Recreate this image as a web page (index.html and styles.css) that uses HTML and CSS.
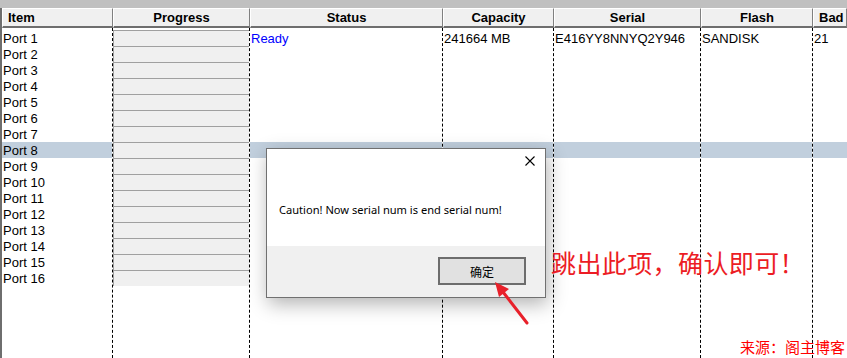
FILE: index.html
```html
<!DOCTYPE html>
<html>
<head>
  <meta charset="utf-8">
  <title>Mass Production</title>
  <link rel="stylesheet" href="styles.css">
</head>
<body>

  <div class="topbar"></div>

  <div class="grid">
    <div class="col col-item">
      <div class="head head-left">Item</div>
      <div class="rows">
        <div class="cell">Port 1</div>
        <div class="cell">Port 2</div>
        <div class="cell">Port 3</div>
        <div class="cell">Port 4</div>
        <div class="cell">Port 5</div>
        <div class="cell">Port 6</div>
        <div class="cell">Port 7</div>
        <div class="cell sel">Port 8</div>
        <div class="cell">Port 9</div>
        <div class="cell">Port 10</div>
        <div class="cell">Port 11</div>
        <div class="cell">Port 12</div>
        <div class="cell">Port 13</div>
        <div class="cell">Port 14</div>
        <div class="cell">Port 15</div>
        <div class="cell">Port 16</div>
      </div>
    </div>

    <div class="col col-progress">
      <div class="head">Progress</div>
      <div class="rows">
        <div class="bar"></div>
        <div class="bar"></div>
        <div class="bar"></div>
        <div class="bar"></div>
        <div class="bar"></div>
        <div class="bar"></div>
        <div class="bar"></div>
        <div class="bar"></div>
        <div class="bar"></div>
        <div class="bar"></div>
        <div class="bar"></div>
        <div class="bar"></div>
        <div class="bar"></div>
        <div class="bar"></div>
        <div class="bar"></div>
        <div class="bar"></div>
      </div>
    </div>

    <div class="col col-status">
      <div class="head">Status</div>
      <div class="rows">
        <div class="cell ready">Ready</div>
        <div class="cell"></div>
        <div class="cell"></div>
        <div class="cell"></div>
        <div class="cell"></div>
        <div class="cell"></div>
        <div class="cell"></div>
        <div class="cell sel"></div>
      </div>
    </div>

    <div class="col col-capacity">
      <div class="head">Capacity</div>
      <div class="rows">
        <div class="cell">241664 MB</div>
        <div class="cell"></div>
        <div class="cell"></div>
        <div class="cell"></div>
        <div class="cell"></div>
        <div class="cell"></div>
        <div class="cell"></div>
        <div class="cell sel"></div>
      </div>
    </div>

    <div class="col col-serial">
      <div class="head">Serial</div>
      <div class="rows">
        <div class="cell">E416YY8NNYQ2Y946</div>
        <div class="cell"></div>
        <div class="cell"></div>
        <div class="cell"></div>
        <div class="cell"></div>
        <div class="cell"></div>
        <div class="cell"></div>
        <div class="cell sel"></div>
      </div>
    </div>

    <div class="col col-flash">
      <div class="head">Flash</div>
      <div class="rows">
        <div class="cell">SANDISK</div>
        <div class="cell"></div>
        <div class="cell"></div>
        <div class="cell"></div>
        <div class="cell"></div>
        <div class="cell"></div>
        <div class="cell"></div>
        <div class="cell sel"></div>
      </div>
    </div>

    <div class="col col-bad">
      <div class="head head-left">Bad</div>
      <div class="rows rows-last">
        <div class="cell">21</div>
        <div class="cell"></div>
        <div class="cell"></div>
        <div class="cell"></div>
        <div class="cell"></div>
        <div class="cell"></div>
        <div class="cell"></div>
        <div class="cell sel"></div>
      </div>
    </div>
  </div>

  <!-- message box on top of the list -->
  <div class="dialog">
    <div class="dialog-body">
      <svg class="close" width="10" height="10" viewBox="0 0 10 10">
        <path d="M0.5 0.5 L9.5 9.5 M9.5 0.5 L0.5 9.5" stroke="#000" stroke-width="1.1" fill="none"/>
      </svg>
      <p class="message">Caution! Now serial num is end serial num!</p>
    </div>
    <div class="dialog-foot">
      <button class="ok">确定</button>
    </div>
  </div>

  <!-- annotations -->
  <div class="note">跳出此项，确认即可！</div>
  <svg class="arrow" width="847" height="358" viewBox="0 0 847 358">
    <line x1="527" y1="323" x2="503" y2="292" stroke="#e8202a" stroke-width="3" stroke-linecap="round"/>
    <polygon points="495,282 509,289 499,297" fill="#e8202a"/>
  </svg>
  <div class="source">来源：阁主博客</div>

</body>
</html>
```

FILE: styles.css
```css
* {
  box-sizing: border-box;
}

body {
  margin: 0;
  width: 847px;
  height: 358px;
  overflow: hidden;
  position: relative;
  background-color: #ffffff;
  font-family: "Liberation Sans", Arial, sans-serif;
  font-size: 13px;
  color: #000000;
}

.topbar {
  height: 8px;
  background-color: #c0c0c0;
}

/* List view */

.grid {
  display: flex;
  height: 350px;
  border-left: 2px solid #6e6e6e;
}

.col {
  display: flex;
  flex-direction: column;
  flex-shrink: 0;
}

.col-item { width: 111px; }
.col-progress { width: 137px; }
.col-status { width: 193px; }
.col-capacity { width: 111px; }
.col-serial { width: 147px; }
.col-flash { width: 112px; }
.col-bad { flex: 1; }

.head {
  height: 20px;
  background-color: #f0f0f0;
  border-top: 1px solid #ffffff;
  border-left: 1px solid #ffffff;
  border-right: 1px solid #808080;
  border-bottom: 2px solid #6e6e6e;
  font-weight: bold;
  text-align: center;
  line-height: 17px;
  white-space: nowrap;
}

.head-left {
  text-align: left;
  padding-left: 5px;
}

.rows {
  flex: 1;
  padding-top: 2px;
  border-right: 1px dashed #000000;
}

.rows-last {
  border-right: none;
}

.cell {
  height: 16px;
  line-height: 17px;
  padding-left: 1px;
  white-space: nowrap;
  overflow: hidden;
}

.cell.sel {
  background-color: #c1cfdd;
}

.ready {
  color: #0000ff;
}

.bar {
  height: 16px;
  background-color: #f0f0f0;
  border-top: 1px solid #a0a0a0;
  border-left: 1px solid #a0a0a0;
}

/* Message box */

.dialog {
  position: absolute;
  left: 266px;
  top: 148px;
  width: 280px;
  height: 150px;
  border: 1px solid #707070;
  background-color: #f0f0f0;
  box-shadow: 2px 6px 18px rgba(0, 0, 0, 0.3);
  display: flex;
  flex-direction: column;
  font-family: "Noto Sans", "Noto Sans CJK SC", sans-serif;
}

.dialog-body {
  height: 97px;
  background-color: #ffffff;
  position: relative;
  padding: 46px 0 0 12px;
}

.close {
  position: absolute;
  right: 10px;
  top: 7px;
}

.message {
  margin: 0;
  font-size: 11.1px;
  line-height: 30px;
  color: #000000;
}

.dialog-foot {
  flex: 1;
  display: flex;
  justify-content: flex-end;
  align-items: flex-start;
  padding: 11px 19px 0 0;
}

.ok {
  width: 88px;
  height: 28px;
  background-color: #e1e1e1;
  border: 2px solid #6d6d6d;
  font-family: "Noto Sans CJK SC", sans-serif;
  font-size: 12px;
  color: #000000;
  padding: 0;
}

/* Annotations */

.note {
  position: absolute;
  left: 551px;
  top: 247px;
  font-family: "Noto Sans CJK SC", sans-serif;
  font-size: 25px;
  letter-spacing: 0.4px;
  line-height: 30px;
  color: #ec1c24;
  white-space: nowrap;
}

.arrow {
  position: absolute;
  left: 0;
  top: 0;
  pointer-events: none;
}

.source {
  position: absolute;
  left: 740px;
  top: 338px;
  font-family: "Noto Sans CJK SC", sans-serif;
  font-size: 15px;
  line-height: 18px;
  color: #ff0000;
  white-space: nowrap;
}
```
